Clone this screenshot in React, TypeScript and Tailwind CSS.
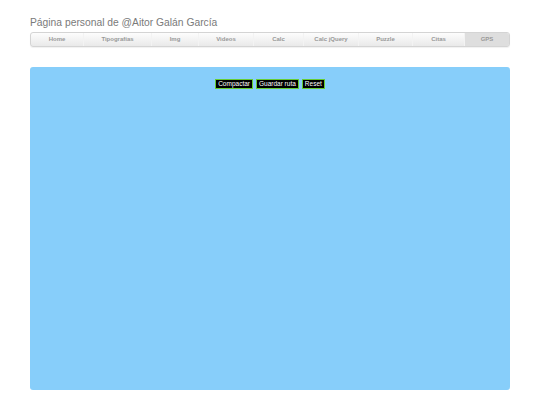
const tabs = [
  { label: 'Home', w: 'w-[52px]' },
  { label: 'Tipografías', w: 'w-[68px]' },
  { label: 'Img', w: 'w-[47px]' },
  { label: 'Videos', w: 'w-[55px]' },
  { label: 'Calc', w: 'w-[50px]' },
  { label: 'Calc jQuery', w: 'w-[55px]' },
  { label: 'Puzzle', w: 'w-[54px]' },
  { label: 'Citas', w: 'w-[52px]' },
  { label: 'GPS', w: 'flex-1', active: true },
];

export default function App() {
  return (
    <div className="min-h-[405px] bg-white font-['Liberation_Sans',Arial,sans-serif]">
      <div className="mx-[30px] w-[480px] pt-[16px]">
        <h1 className="text-[10.3px] leading-[14px] text-[#7a7a7a] font-normal mb-[2px]">
          Página personal de @Aitor Galán García
        </h1>

        <nav className="flex h-[15px] rounded-[3px] border border-[#d4d4d4] bg-gradient-to-b from-[#fdfdfd] to-[#e9e9e9] shadow-[0_1px_1px_rgba(0,0,0,0.06)] overflow-hidden">
          {tabs.map((t, i) => (
            <a
              key={t.label}
              className={`${t.w} flex items-center justify-center text-[6px] font-bold text-[#999] ${
                i > 0 ? 'border-l border-[#f3f3f3]' : ''
              } ${t.active ? 'bg-[#dedede]' : ''}`}
            >
              {t.label}
            </a>
          ))}
        </nav>

        <div className="mt-[20px] h-[323px] rounded-[3px] bg-[#87cefa] pt-[12px]">
          <div className="flex justify-center gap-[3px]">
            <button className="h-[10px] px-[2px] bg-black border border-[#66cc33] text-white text-[6.5px] leading-none">
              Compactar
            </button>
            <button className="h-[10px] px-[2px] bg-black border border-[#66cc33] text-white text-[6.5px] leading-none">
              Guardar ruta
            </button>
            <button className="h-[10px] px-[2px] bg-black border border-[#66cc33] text-white text-[6.5px] leading-none">
              Reset
            </button>
          </div>
        </div>
      </div>
    </div>
  );
}
